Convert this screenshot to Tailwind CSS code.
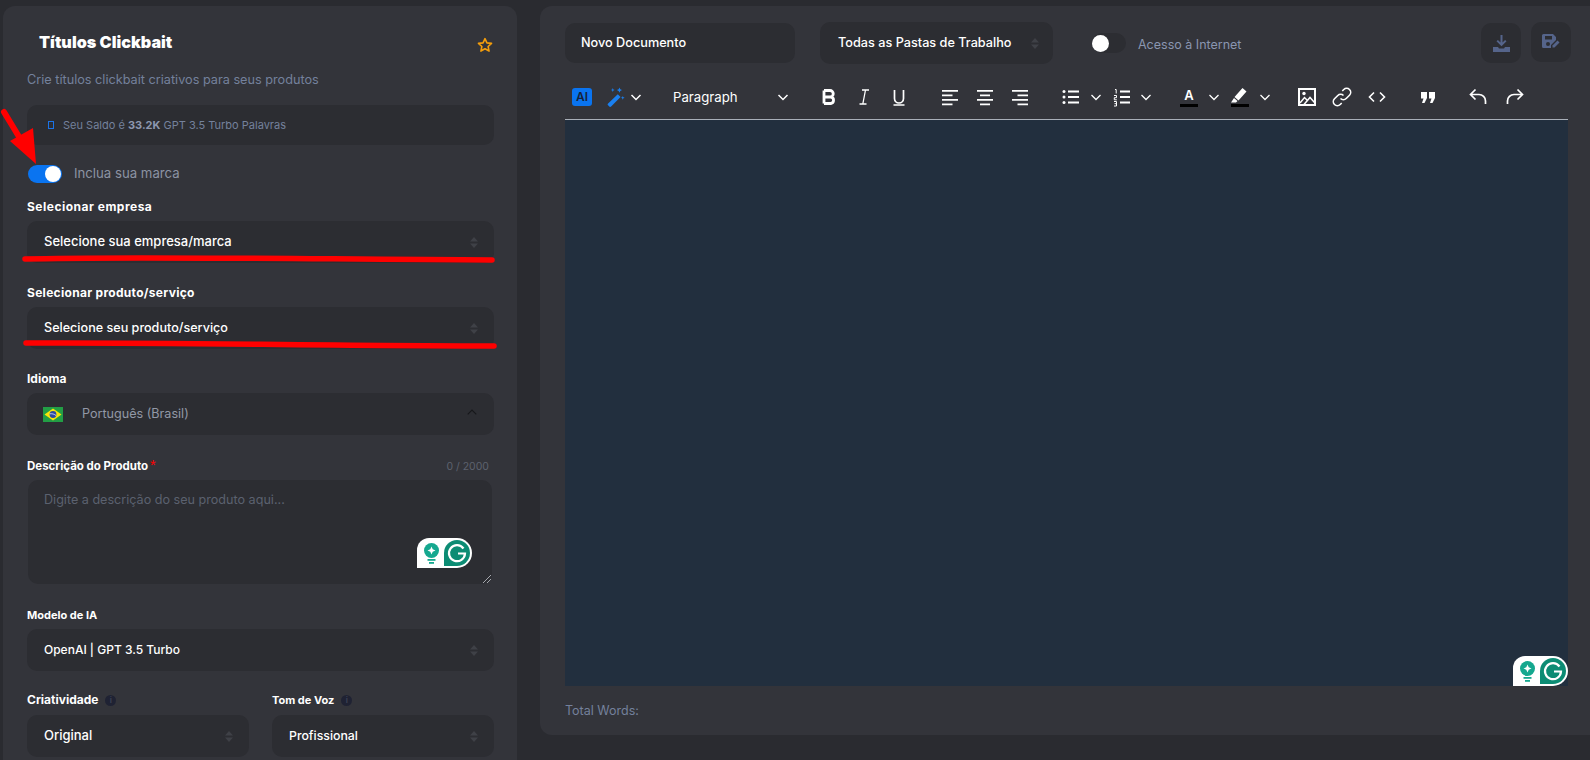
<!DOCTYPE html>
<html lang="pt-BR">
<head>
    <meta charset="UTF-8">
    <title>Títulos Clickbait</title>
    <script src="https://cdn.jsdelivr.net/npm/@tailwindcss/browser@4"></script>
</head>
<body class="bg-[#2a2b30] h-[760px] w-[1590px] overflow-hidden relative font-['Inter',sans-serif]">
    <div class="flex items-start pt-[6px]">

        <!-- Left form card -->
        <div class="w-[514px] h-[754px] ml-[3px] pl-[24px] pr-[23px] bg-[#33343a] rounded-t-[12px] shrink-0">
            <div class="flex items-center justify-between h-[32px] mt-[20px] pl-[12px] pr-[1px]">
                <h1 class="text-[16.2px] font-black text-white leading-none">Títulos Clickbait</h1>
                <svg class="w-[16px] h-[16px] mt-[6px]" viewBox="0 0 24 24" fill="none" stroke="#f59e0b" stroke-width="2.4" stroke-linejoin="round"><path d="M12 2.500l2.900 6.300 6.900.8-5.100 4.700 1.400 6.800-6.100-3.400-6.100 3.400 1.400-6.800-5.100-4.700 6.900-.8z"/></svg>
            </div>
            <p class="text-[12.7px] leading-[16px] text-[#74819c] mt-[14px]">Crie títulos clickbait criativos para seus produtos</p>

            <div class="flex items-center h-[40px] mt-[17px] pl-[21px] bg-[#2c2d32] rounded-[10px] text-[11px] text-[#74819c]">
                <span class="w-[6px] h-[8px] border border-[#1a73e8] mr-[9px]"></span>
                <span>Seu Saldo é <b class="font-bold text-[#8c98b0]">33.2K</b> GPT 3.5 Turbo Palavras</span>
            </div>

            <div class="flex items-center h-[18px] mt-[20px] pl-[1px]">
                <span class="flex justify-end items-center w-[34px] h-[18px] rounded-full bg-[#0a74f0] pr-[1px]"><span class="w-[16px] h-[16px] rounded-full bg-white"></span></span>
                <span class="text-[13.2px] text-[#8c93a3] ml-[12px]">Inclua sua marca</span>
            </div>

            <label class="block text-[12px] tracking-[0.5px] leading-[14px] font-bold text-white mt-[17px]">Selecionar empresa</label>
            <div class="flex items-center justify-between h-[42px] mt-[7px] pl-[17px] pr-[16px] bg-[#2c2d32] rounded-[10px]">
                <span class="text-[13px] font-medium text-white">Selecione sua empresa/marca</span>
                <svg class="w-[8px] h-[11px]" viewBox="0 0 8 11" fill="#3f4147"><path d="M4 0l4 4.500H0zM4 11L0 6.500h8z"/></svg>
            </div>

            <label class="block text-[12px] tracking-[0.3px] leading-[14px] font-bold text-white mt-[23px]">Selecionar produto/serviço</label>
            <div class="flex items-center justify-between h-[42px] mt-[7px] pl-[17px] pr-[16px] bg-[#2c2d32] rounded-[10px]">
                <span class="text-[12.6px] font-medium text-white">Selecione seu produto/serviço</span>
                <svg class="w-[8px] h-[11px]" viewBox="0 0 8 11" fill="#3f4147"><path d="M4 0l4 4.500H0zM4 11L0 6.500h8z"/></svg>
            </div>

            <label class="block text-[12px] leading-[14px] font-bold text-white mt-[23px]">Idioma</label>
            <div class="flex items-center h-[42px] mt-[7px] pl-[16px] pr-[17px] bg-[#2c2d32] rounded-[10px]">
                <svg class="w-[20px] h-[15px]" viewBox="0 0 20 15"><rect width="20" height="15" fill="#229e45"/><path d="M10 1.500L18.500 7.500 10 13.500 1.500 7.500z" fill="#f8e509"/><circle cx="10" cy="7.500" r="3.400" fill="#2b49a3"/><path d="M6.800 6.800c2.400-.3 4.600.3 6.300 1.800" stroke="#fff" stroke-width=".7" fill="none"/></svg>
                <span class="text-[12.6px] text-[#9298a6] ml-[19px]">Português (Brasil)</span>
                <svg class="w-[10px] h-[6px] ml-auto mb-[4px]" viewBox="0 0 10 6" fill="none" stroke="#17181b" stroke-width="1.200"><path d="M.7 5.300L5 1l4.300 4.300"/></svg>
            </div>

            <div class="flex items-center justify-between mt-[23px] h-[14px] pr-[5px]">
                <label class="text-[11.5px] leading-[14px] font-bold text-white">Descrição do Produto<span class="font-['Liberation_Sans'] text-[#f00] text-[15px] font-normal leading-none ml-[2px]">*</span></label>
                <span class="text-[10.5px] text-[#5d626e] mt-[3px]">0 / 2000</span>
            </div>
            <div class="relative h-[104px] mt-[8px] ml-[1px] mr-[2px] pl-[16px] pt-[6px] bg-[#2c2d32] rounded-[10px]">
                <span class="text-[12.6px] text-[#5b616f]">Digite a descrição do seu produto aqui...</span>
                <svg class="absolute right-[1px] bottom-[1px] w-[8px] h-[8px]" viewBox="0 0 8 8" stroke="#a5a7ad" stroke-width="1"><path d="M0 8L8 0M4 8l4-4"/></svg>
            </div>

            <label class="block text-[11px] leading-[14px] font-bold text-white mt-[24px]">Modelo de IA</label>
            <div class="flex items-center justify-between h-[42px] mt-[7px] pl-[17px] pr-[16px] bg-[#2c2d32] rounded-[10px]">
                <span class="text-[12px] font-medium text-white">OpenAI | GPT 3.5 Turbo</span>
                <svg class="w-[8px] h-[11px]" viewBox="0 0 8 11" fill="#3f4147"><path d="M4 0l4 4.500H0zM4 11L0 6.500h8z"/></svg>
            </div>

            <div class="grid grid-cols-2 gap-x-[23px] mt-[22px]">
                <div>
                    <label class="flex items-center h-[14px] text-[12px] font-bold text-white">Criatividade
                        <span class="flex items-center justify-center w-[11px] h-[11px] ml-[7px] rounded-full bg-[#1f2233] text-[8px] text-[#3c4052]">i</span>
                    </label>
                    <div class="flex items-center justify-between h-[42px] mt-[8px] pl-[17px] pr-[16px] bg-[#2c2d32] rounded-[10px]">
                        <span class="text-[13px] font-medium text-white">Original</span>
                        <svg class="w-[8px] h-[11px]" viewBox="0 0 8 11" fill="#3f4147"><path d="M4 0l4 4.500H0zM4 11L0 6.500h8z"/></svg>
                    </div>
                </div>
                <div>
                    <label class="flex items-center h-[14px] text-[11px] font-bold text-white">Tom de Voz
                        <span class="flex items-center justify-center w-[11px] h-[11px] ml-[7px] rounded-full bg-[#1f2233] text-[8px] text-[#3c4052]">i</span>
                    </label>
                    <div class="flex items-center justify-between h-[42px] mt-[8px] pl-[17px] pr-[16px] bg-[#2c2d32] rounded-[10px]">
                        <span class="text-[12.3px] font-medium text-white">Profissional</span>
                        <svg class="w-[8px] h-[11px]" viewBox="0 0 8 11" fill="#3f4147"><path d="M4 0l4 4.500H0zM4 11L0 6.500h8z"/></svg>
                    </div>
                </div>
            </div>
        </div>

        <!-- Right editor card -->
        <div class="w-[1050px] h-[729px] ml-[23px] pl-[25px] pr-[22px] bg-[#33343a] rounded-l-[12px] shrink-0">
            <div class="flex items-center h-[42px] mt-[16px]">
                <div class="flex items-center w-[230px] h-[40px] pl-[16px] bg-[#2c2d32] rounded-[10px] text-[12.7px] font-medium text-white">Novo Documento</div>
                <div class="flex items-center justify-between w-[233px] h-[42px] ml-[25px] pl-[18px] pr-[14px] bg-[#2c2d32] rounded-[10px]">
                    <span class="text-[12.7px] font-medium text-white">Todas as Pastas de Trabalho</span>
                    <svg class="w-[8px] h-[11px]" viewBox="0 0 8 11" fill="#3f4147"><path d="M4 0l4 4.500H0zM4 11L0 6.500h8z"/></svg>
                </div>
                <span class="flex items-center w-[34px] h-[20px] ml-[39px] rounded-full bg-[#2c2d32]"><span class="w-[17px] h-[17px] rounded-full bg-white"></span></span>
                <span class="text-[12.5px] text-[#8a96b0] ml-[12px] mt-[4px]">Acesso à Internet</span>
                <div class="flex items-center justify-center w-[40px] h-[40px] ml-auto bg-[#2c2d32] rounded-[10px]">
                    <svg class="w-[17px] h-[17px]" viewBox="0 0 17 17" fill="#55648a"><path d="M7.500 0h2v7.500l2.600-2.600 1.400 1.400-5 5-5-5 1.400-1.400 2.600 2.600z"/><path d="M0 12h5l1 1.500h5l1-1.500h5v5H0z"/></svg>
                </div>
                <div class="flex items-center justify-center w-[40px] h-[40px] ml-[10px] mr-[-3px] mt-[-2px] bg-[#2c2d32] rounded-[10px]">
                    <svg class="w-[18px] h-[16px]" viewBox="0 0 18 16" fill="#55648a"><path d="M1.500 0H11l3 3v3l-5 5v3H1.500A1.500 1.500 0 0 1 0 12.500v-11A1.500 1.500 0 0 1 1.500 0z"/><rect x="3" y="2" width="7" height="3.500" fill="#2c2d32"/><circle cx="6" cy="10" r="2" fill="#2c2d32"/><path d="M10.500 13.500v-2l5-5 2 2-5 5z"/></svg>
                </div>
            </div>

            <!-- Editor toolbar -->
            <div class="flex items-center h-[44px] mt-[11px] pl-[7px] text-white">
                <span class="flex items-center justify-center w-[20px] h-[18px] rounded-[3px] bg-[#0a74f0] text-[12px] font-semibold text-[#15233b]">AI</span>
                <svg class="w-[20px] h-[20px] ml-[13px]" viewBox="0 0 18 18" fill="#1a80f0"><path d="M11.500 6.500l2.500 2.500-8.500 8.500a1.200 1.200 0 0 1-1.700 0l-1-1a1.200 1.200 0 0 1 0-1.700z"/><path d="M13 .5l.7 1.600 1.600.7-1.600.7-.7 1.600-.7-1.600-1.600-.7 1.600-.7zM7 1l.5 1.200 1.200.5-1.200.5L7 4.400l-.5-1.200-1.200-.5 1.200-.5zM16 8l.5 1.200 1.200.5-1.200.5-.5 1.200-.5-1.200-1.200-.5 1.200-.5z"/></svg>
                <svg class="w-[12px] h-[7px] ml-[5px]" viewBox="0 0 12 7" fill="none" stroke="#fff" stroke-width="1.500"><path d="M1.500 1L6 5.500 10.500 1"/></svg>
                <span class="w-[104px] ml-[31px] mt-[1px] text-[13.2px] text-white">Paragraph</span>
                <svg class="w-[12px] h-[7px]" viewBox="0 0 12 7" fill="none" stroke="#fff" stroke-width="1.500"><path d="M1.500 1L6 5.500 10.500 1"/></svg>

                <svg class="w-[24px] h-[24px] ml-[28px]" viewBox="0 0 24 24" fill="none" stroke="#fff" stroke-width="2.800"><path d="M7 5.500v13M7 5.500h6a3.200 3.200 0 0 1 0 6.500H7m0 0h6.800a3.300 3.300 0 0 1 0 6.500H7"/></svg>
                <svg class="w-[24px] h-[24px] ml-[11px]" viewBox="0 0 24 24" fill="none" stroke="#fff" stroke-width="1.300"><path d="M10 5h7M7.500 19h7M13.500 5L10.800 19"/></svg>
                <svg class="w-[24px] h-[24px] ml-[11px]" viewBox="0 0 24 24" fill="none" stroke="#fff" stroke-width="1.700"><path d="M7.500 5v8.500a4.500 4.500 0 0 0 9 0V5M6.500 20h11"/></svg>

                <svg class="w-[24px] h-[24px] ml-[27px]" viewBox="0 0 24 24" fill="none" stroke="#fff" stroke-width="1.800"><path d="M4 5.800h16M4 10.300h10.500M4 14.800h16M4 19.300h10.500"/></svg>
                <svg class="w-[24px] h-[24px] ml-[11px]" viewBox="0 0 24 24" fill="none" stroke="#fff" stroke-width="1.800"><path d="M4 5.800h16M7 10.300h10M4 14.800h16M7 19.300h10"/></svg>
                <svg class="w-[24px] h-[24px] ml-[11px]" viewBox="0 0 24 24" fill="none" stroke="#fff" stroke-width="1.800"><path d="M4 5.800h16M9.500 10.300H20M4 14.800h16M9.500 19.300H20"/></svg>

                <svg class="w-[24px] h-[24px] ml-[27px]" viewBox="0 0 24 24" fill="none" stroke="#fff" stroke-width="1.800"><path d="M9 6.500h11M9 12h11M9 17.500h11"/><g fill="#fff" stroke="none"><circle cx="5" cy="6.500" r="1.500"/><circle cx="5" cy="12" r="1.500"/><circle cx="5" cy="17.500" r="1.500"/></g></svg>
                <svg class="w-[12px] h-[7px] ml-[7px]" viewBox="0 0 12 7" fill="none" stroke="#fff" stroke-width="1.300"><path d="M1.500 1L6 5.500 10.500 1"/></svg>
                <svg class="w-[24px] h-[24px] ml-[8px]" viewBox="0 0 24 24" fill="none" stroke="#fff"><path stroke-width="1.800" d="M10 6.500h10M10 12h10M10 17.500h10"/><path stroke-width="1" d="M5 4.500h1.200v4M4 10.500h2.500v2.200H4.300v2.100h2.500M4 16.500h2.500v4.500H4M4.500 18.700h2"/></svg>
                <svg class="w-[12px] h-[7px] ml-[6px]" viewBox="0 0 12 7" fill="none" stroke="#fff" stroke-width="1.300"><path d="M1.500 1L6 5.500 10.500 1"/></svg>

                <span class="flex flex-col items-center w-[24px] ml-[25px]">
                    <span class="text-[13px] leading-[15px] font-semibold text-white mt-[1px]">A</span>
                    <span class="w-[18px] h-[3px] bg-black mt-[1px]"></span>
                </span>
                <svg class="w-[12px] h-[7px] ml-[7px]" viewBox="0 0 12 7" fill="none" stroke="#fff" stroke-width="1.300"><path d="M1.500 1L6 5.500 10.500 1"/></svg>
                <span class="flex flex-col items-center w-[24px] ml-[8px]">
                    <svg class="w-[18px] h-[15px] mt-[1px]" viewBox="0 0 18 15" fill="#fff"><path d="M11.500 0l4 3.500-8 9-4-3.500zM3 10l3.500 3-1.500 1.500H0z"/></svg>
                    <span class="w-[18px] h-[3px] bg-black mt-[1px]"></span>
                </span>
                <svg class="w-[12px] h-[7px] ml-[7px]" viewBox="0 0 12 7" fill="none" stroke="#fff" stroke-width="1.300"><path d="M1.500 1L6 5.500 10.500 1"/></svg>

                <svg class="w-[24px] h-[24px] ml-[24px]" viewBox="0 0 24 24" fill="none" stroke="#fff"><rect x="4" y="4" width="16" height="16" stroke-width="2"/><path stroke-width="1.500" d="M5 18l4.500-5.500 3 3M9 19.500l6-7 4.500 5"/><circle cx="9" cy="8.500" r="1.700" fill="#fff" stroke="none"/></svg>
                <svg class="w-[24px] h-[24px] ml-[11px]" viewBox="0 0 24 24" fill="none" stroke="#fff" stroke-width="1.600"><path d="M10.500 13.500a4 4 0 0 0 5.700 0l3.300-3.300a4 4 0 0 0-5.700-5.700l-1.500 1.500"/><path d="M13.500 10.500a4 4 0 0 0-5.700 0l-3.300 3.300a4 4 0 0 0 5.700 5.700l1.500-1.500"/></svg>
                <svg class="w-[24px] h-[24px] ml-[11px]" viewBox="0 0 24 24" fill="none" stroke="#fff" stroke-width="1.600"><path d="M9 7.500L4.500 12 9 16.500M15 7.500l4.500 4.500-4.500 4.500"/></svg>
                <svg class="w-[24px] h-[24px] ml-[27px]" viewBox="0 0 24 24" fill="#fff"><path d="M5 7h6v6l-2.500 5H6l1.500-4.500H5zM13 7h6v6l-2.500 5H14l1.500-4.500H13z"/></svg>
                <svg class="w-[24px] h-[24px] ml-[26px]" viewBox="0 0 24 24" fill="none" stroke="#fff" stroke-width="1.700"><path d="M9.500 4.500L4.500 9.500l5 5M4.500 9.500h8.500a6.500 6.500 0 0 1 6.500 6.500v3"/></svg>
                <svg class="w-[24px] h-[24px] ml-[13px]" viewBox="0 0 24 24" fill="none" stroke="#fff" stroke-width="1.700"><path d="M14.500 4.500l5 5-5 5M19.500 9.500H11A6.500 6.500 0 0 0 4.500 16v3"/></svg>
            </div>

            <div class="h-[567px] bg-[#222f3e] border-t border-[#a9afb8]"></div>
            <p class="text-[12.5px] text-[#74819c] mt-[16px]">Total Words:</p>
        </div>
    </div>

    <!-- Grammarly widgets, sitting over the fields -->
    <div class="absolute left-[417px] top-[538px] flex items-center justify-between w-[55px] h-[30px] pl-[7px] pr-[2px] bg-white rounded-tl-[12px] rounded-r-[15px]">
        <svg class="w-[15px] h-[21px]" viewBox="0 0 15 21"><circle cx="7.500" cy="7.500" r="7.500" fill="#15a88f"/><path d="M7.500 3.500l1.200 2.800 2.800 1.200-2.800 1.200-1.200 2.800-1.200-2.800L3.500 7.500l2.800-1.200z" fill="#fff"/><rect x="3.500" y="16" width="8" height="1.800" fill="#15a88f"/><rect x="5" y="19" width="5" height="1.800" fill="#15a88f"/></svg>
        <svg class="w-[26px] h-[26px]" viewBox="0 0 26 26"><path d="M13 0a13 13 0 0 1 0 26H0V13A13 13 0 0 1 13 0z" fill="#0c8c74"/><path d="M19.500 8.500A8 8 0 1 0 21 13.500h-7" fill="none" stroke="#fff" stroke-width="2.200"/></svg>
    </div>
    <div class="absolute left-[1513px] top-[656px] flex items-center justify-between w-[55px] h-[30px] pl-[7px] pr-[2px] bg-white rounded-tl-[12px] rounded-r-[15px]">
        <svg class="w-[15px] h-[21px]" viewBox="0 0 15 21"><circle cx="7.500" cy="7.500" r="7.500" fill="#15a88f"/><path d="M7.500 3.500l1.200 2.800 2.800 1.200-2.800 1.200-1.200 2.800-1.200-2.800L3.500 7.500l2.800-1.200z" fill="#fff"/><rect x="3.500" y="16" width="8" height="1.800" fill="#15a88f"/><rect x="5" y="19" width="5" height="1.800" fill="#15a88f"/></svg>
        <svg class="w-[26px] h-[26px]" viewBox="0 0 26 26"><path d="M13 0a13 13 0 0 1 0 26H0V13A13 13 0 0 1 13 0z" fill="#0c8c74"/><path d="M19.500 8.500A8 8 0 1 0 21 13.500h-7" fill="none" stroke="#fff" stroke-width="2.200"/></svg>
    </div>

    <!-- Red annotations drawn on the screenshot -->
    <svg class="absolute left-0 top-0 w-[520px] h-[360px] pointer-events-none" viewBox="0 0 520 360" fill="none">
        <path d="M4 112L24 145" stroke="#f00" stroke-width="6" stroke-linecap="round"/>
        <path d="M36 164L10 141 33 128z" fill="#f00"/>
        <path d="M25 259C120 256 300 259 492 260" stroke="#f00" stroke-width="5.500" stroke-linecap="round"/>
        <path d="M26 343C150 342 330 346 494 346" stroke="#f00" stroke-width="5.500" stroke-linecap="round"/>
    </svg>
</body>
</html>
